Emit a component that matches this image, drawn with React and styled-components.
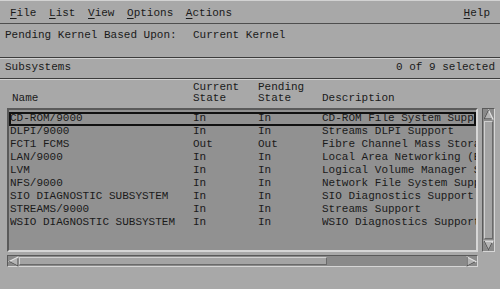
import React from 'react';
import styled, { createGlobalStyle } from 'styled-components';

const GlobalStyle = createGlobalStyle`
  html, body {
    margin: 0;
    padding: 0;
    background: #a8a8a8;
  }
  body {
    font-family: "Liberation Mono", "DejaVu Sans Mono", monospace;
    font-size: 11px;
    color: #1a1a1a;
  }
`;

const Window = styled.div`
  width: 500px;
  height: 289px;
  display: flex;
  flex-direction: column;
  background: #a8a8a8;
  overflow: hidden;
`;

const MenuBar = styled.div`
  height: 24px;
  box-sizing: border-box;
  display: flex;
  align-items: center;
  gap: 12.6px;
  padding: 2px 10px 0 10px;
  border-top: 1px solid #d2d2d2;
  border-bottom: 1px solid #4e4e4e;
  line-height: 13px;
`;

const MenuItem = styled.span`
  margin-left: ${(p) => (p.$right ? 'auto' : '0')};
  u {
    text-decoration: underline;
    text-underline-offset: 2px;
  }
`;

const InfoRow = styled.div`
  height: 33px;
  box-sizing: border-box;
  padding: 5px 0 0 5px;
  display: flex;
  line-height: 13px;
`;

const InfoLabel = styled.span`
  width: 188px;
`;

const Separator = styled.div`
  height: 1px;
  background: #3c3c3c;
  border-bottom: 1px solid #d0d0d0;
`;

const TitleRow = styled.div`
  height: 19px;
  box-sizing: border-box;
  padding: 2px 5px 0 5px;
  display: flex;
  justify-content: space-between;
  line-height: 13px;
`;

const Header = styled.div`
  height: 28px;
  box-sizing: border-box;
  padding: 2px 0 0 12px;
  display: flex;
  align-items: flex-start;
  line-height: 11px;
`;

const Col = styled.div`
  width: ${(p) => p.$w}px;
  flex: ${(p) => (p.$w ? 'none' : '1')};
  white-space: pre;
  overflow: hidden;
`;

const ListArea = styled.div`
  display: flex;
  height: 144px;
  padding-left: 7px;
`;

const ListBox = styled.div`
  width: 471px;
  box-sizing: border-box;
  background: #919191;
  border: 2px solid;
  border-color: #5a5a5a #d6d6d6 #d6d6d6 #5a5a5a;
  padding-top: 2px;
  overflow: hidden;
`;

const Row = styled.div`
  position: relative;
  height: 13px;
  line-height: 13px;
  display: flex;
  padding-left: 1px;
  &::after {
    content: '';
    display: ${(p) => (p.$focused ? 'block' : 'none')};
    position: absolute;
    left: 0;
    right: 0;
    top: 0;
    bottom: -1px;
    border: 2px solid #111;
  }
`;

const VScroll = styled.div`
  width: 13px;
  margin-left: 4px;
  box-sizing: border-box;
  display: flex;
  flex-direction: column;
  background: #8a8a8a;
  border: 1px solid;
  border-color: #5a5a5a #d6d6d6 #d6d6d6 #5a5a5a;
`;

const VThumb = styled.div`
  flex: 1;
  margin: 1px 1px;
  background: #a4a4a4;
  border: 1px solid;
  border-color: #d0d0d0 #6a6a6a #6a6a6a #d0d0d0;
`;

const HScroll = styled.div`
  margin: 3px 0 0 7px;
  width: 471px;
  height: 12px;
  box-sizing: border-box;
  display: flex;
  background: #8a8a8a;
  border: 1px solid;
  border-color: #5a5a5a #d6d6d6 #d6d6d6 #5a5a5a;
`;

const HThumb = styled.div`
  width: 308px;
  box-sizing: border-box;
  margin: 1px 0;
  background: #a4a4a4;
  border: 1px solid;
  border-color: #d0d0d0 #6a6a6a #6a6a6a #d0d0d0;
`;

const HTrough = styled.div`
  flex: 1;
`;

const ArrowBox = styled.svg`
  display: block;
  flex: none;
`;

const Arrow = ({ dir }) => {
  const pts = {
    up: '5,1 9,9 1,9',
    down: '1,1 9,1 5,9',
    left: '1,5 9,1 9,9',
    right: '1,1 9,5 1,9',
  }[dir];
  return (
    <ArrowBox width="11" height="11" viewBox="0 0 10 10">
      <polygon points={pts} fill="#b4b4b4" stroke="#e4e4e4" strokeWidth="1" />
      <polygon points={pts} fill="none" stroke="#555" strokeWidth="1" strokeDasharray="0 10 20" />
    </ArrowBox>
  );
};

const rows = [
  ['CD-ROM/9000', 'In', 'In', 'CD-ROM File System Support'],
  ['DLPI/9000', 'In', 'In', 'Streams DLPI Support'],
  ['FCT1 FCMS', 'Out', 'Out', 'Fibre Channel Mass Storage'],
  ['LAN/9000', 'In', 'In', 'Local Area Networking (Base)'],
  ['LVM', 'In', 'In', 'Logical Volume Manager Support'],
  ['NFS/9000', 'In', 'In', 'Network File System Support'],
  ['SIO DIAGNOSTIC SUBSYSTEM', 'In', 'In', 'SIO Diagnostics Support'],
  ['STREAMS/9000', 'In', 'In', 'Streams Support'],
  ['WSIO DIAGNOSTIC SUBSYSTEM', 'In', 'In', 'WSIO Diagnostics Support'],
];

const App = () => (
  <Window>
    <GlobalStyle />
    <MenuBar>
      <MenuItem><u>F</u>ile</MenuItem>
      <MenuItem><u>L</u>ist</MenuItem>
      <MenuItem><u>V</u>iew</MenuItem>
      <MenuItem><u>O</u>ptions</MenuItem>
      <MenuItem><u>A</u>ctions</MenuItem>
      <MenuItem $right><u>H</u>elp</MenuItem>
    </MenuBar>
    <InfoRow>
      <InfoLabel>Pending Kernel Based Upon:</InfoLabel>
      <span>Current Kernel</span>
    </InfoRow>
    <Separator />
    <TitleRow>
      <span>Subsystems</span>
      <span>0 of 9 selected</span>
    </TitleRow>
    <Separator />
    <Header>
      <Col $w={181}>{'\n'}Name</Col>
      <Col $w={65}>Current{'\n'}State</Col>
      <Col $w={64}>Pending{'\n'}State</Col>
      <Col>{'\n'}Description</Col>
    </Header>
    <ListArea>
      <ListBox>
        {rows.map(([name, cur, pend, desc], i) => (
          <Row key={name} $focused={i === 0}>
            <Col $w={183}>{name}</Col>
            <Col $w={65}>{cur}</Col>
            <Col $w={64}>{pend}</Col>
            <Col>{desc}</Col>
          </Row>
        ))}
      </ListBox>
      <VScroll>
        <Arrow dir="up" />
        <VThumb />
        <Arrow dir="down" />
      </VScroll>
    </ListArea>
    <HScroll>
      <Arrow dir="left" />
      <HThumb />
      <HTrough />
      <Arrow dir="right" />
    </HScroll>
  </Window>
);

export default App;
